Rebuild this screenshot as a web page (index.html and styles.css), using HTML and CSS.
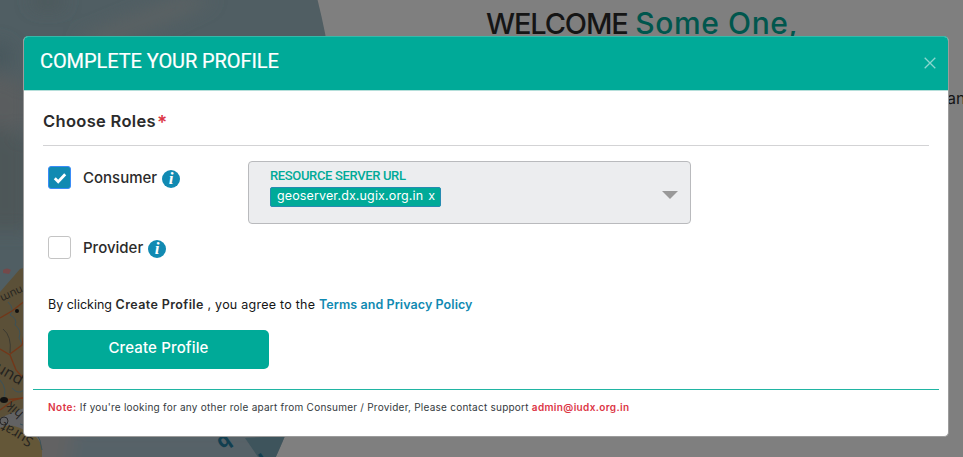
FILE: index.html
```html
<!DOCTYPE html>
<html lang="en">
<head>
<meta charset="utf-8">
<title>Complete your profile</title>
<link rel="stylesheet" href="styles.css">
</head>
<body>
<div class="page" aria-hidden="true">
  <svg class="scene" viewBox="0 0 963 457">
    <defs>
      <clipPath id="disc"><circle cx="-356.6" cy="168.8" r="695"/></clipPath>
      <filter id="soft" x="-30%" y="-30%" width="160%" height="160%"><feGaussianBlur stdDeviation="9"/></filter>
    </defs>
    <g clip-path="url(#disc)">
      <rect width="340" height="457" fill="#505e63"/>
      <g filter="url(#soft)">
        <path d="M75 40 L135 15 L185 -5 L215 0 L160 25 L100 48Z" fill="#5b6264"/>
        <path d="M-20 75 Q10 70 30 90 V130 H-20Z" fill="#5a5d5f"/>
        <path d="M-10 40 L12 48 L10 66 L-10 70Z" fill="#46565c"/>
        <ellipse cx="48" cy="2" rx="18" ry="6" fill="#4b5658"/>
        <path d="M-20 120 L30 140 V230 H-20Z" fill="#4d5659"/>
        <path d="M-20 400 H80 L65 480 H-20Z" fill="#626263"/>
        <path d="M75 425 H300 V480 H65Z" fill="#566267"/>
      </g>
      <path d="M0 292 L20 269 L30 266 V400 L24 408 L0 418Z" fill="#5b5038"/>
      <path d="M0 428 Q10 422 24 430 Q39 435 42 448 L42 457 H0Z" fill="#645738"/>
      <path d="M245 438 L285 436 L276 457 H258Z" fill="#3e545c"/>
      <g fill="none" stroke="#3b525a">
        <path d="M8 302 q7 7 2 13 q8 4 5 10 q7 5 4 13 l5 9"/>
        <path d="M0 380 q8 9 3 20 M24 390 q-6 5 -12 -2 M20 424 q20 4 22 26"/>
      </g>
      <g fill="none" stroke="#733719">
        <path d="M0 318 L12 311 L26 300 M0 349 L10 355 L16 370 L24 379 M10 354 L22 345 L24 335 M0 410 L14 400 L26 397 M4 400 L24 398" stroke-width="1.4"/>
        <path d="M3 329 q9 7 7 24" stroke="#3c3a31"/>
      </g>
      <path d="M3 270 q4 -3 8 0 l-2 4 -6 -1Z" fill="#74494a"/>
      <ellipse cx="4" cy="400" rx="4" ry="3" fill="#111"/>
      <circle cx="17" cy="311" r="2" fill="#111"/>
      <circle cx="4" cy="421" r="4" fill="none" stroke="#292929"/>
      <g class="map-label">
        <text transform="translate(21 286) rotate(155)" font-size="11">num</text>
        <text transform="translate(24 378) rotate(210)" font-size="16">pun</text>
        <text transform="translate(24 413) rotate(222)" font-size="13">hik</text>
        <text transform="translate(34 439) rotate(210)" font-size="14">Surat</text>
      </g>
      <g class="sea-label">
        <text transform="translate(226 433) rotate(145)" font-size="20">b</text>
        <text transform="translate(262 452) rotate(145)" font-size="22">n</text>
      </g>
    </g>
  </svg>
  <div class="welcome"><span class="greet">WELCOME</span> <span class="user">Some One,</span></div>
  <div class="behind">an</div>
</div>

<main class="modal">
  <header class="head">
    <h1>COMPLETE YOUR PROFILE</h1>
    <svg class="close" viewBox="0 0 12 12"><path d="M.7 .7 L11.3 11.3 M11.3 .7 L.7 11.3"/></svg>
  </header>
  <section class="body">
    <h2><span class="choose">Choose Roles</span><span class="star">*</span></h2>
    <div class="roles">
      <div class="role-list">
        <div class="role">
          <span class="box checked"><svg viewBox="0 0 14 12"><path d="M1.8 6.3 L5.2 9.7 L12.2 2.2"/></svg></span>
          <span class="consumer">Consumer</span>
          <svg class="info" viewBox="0 0 18 18"><circle cx="9" cy="9" r="9"/><text x="9" y="14.3">i</text></svg>
        </div>
        <div class="role">
          <span class="box"></span>
          <span class="provider">Provider</span>
          <svg class="info" viewBox="0 0 18 18"><circle cx="9" cy="9" r="9"/><text x="9" y="14.3">i</text></svg>
        </div>
      </div>
      <div class="select">
        <div class="field">
          <div class="label">RESOURCE SERVER URL</div>
          <div class="tag"><span class="server">geoserver.dx.ugix.org.in</span><span>x</span></div>
        </div>
        <svg class="arrow" viewBox="0 0 16 8"><path d="M0 0 H16 L8 8Z"/></svg>
      </div>
    </div>
    <p class="terms"><span class="t1">By clicking </span><b class="t2">Create Profile</b><span class="t3"> , you agree to the </span><a>Terms and Privacy Policy</a></p>
    <button type="button">Create Profile</button>
  </section>
  <footer><b class="note">Note:</b><span class="msg"> If you're looking for any other role apart from Consumer / Provider, Please contact support </span><b class="mail">admin@iudx.org.in</b></footer>
</main>
</body>
</html>
```

FILE: styles.css
```css
* { box-sizing: border-box; }
body {
  margin: 0;
  width: 963px;
  height: 457px;
  overflow: hidden;
  background: #7f7f7f;
  font-family: Inter, Roboto, sans-serif;
  color: #2b2b2b;
}
.page { position: absolute; inset: 0; overflow: hidden; }
.scene { position: absolute; inset: 0; width: 963px; height: 457px; }
.map-label { fill: #24231f; font-family: "Open Sans", sans-serif; }
.sea-label { fill: #123f50; font-family: "Open Sans", sans-serif; font-weight: 700; }
.welcome {
  position: absolute;
  left: 486px;
  top: 5px;
  font-size: 29px;
  line-height: 36px;
  font-weight: 500;
  white-space: nowrap;
  color: #151515;
}
.greet { letter-spacing: -1.15px; }
.user { letter-spacing: .6px; font-size: 30px; color: #00564d; }
.behind { position: absolute; left: 947px; top: 87px; font-size: 16px; line-height: 22px; color: #151515; }

.modal {
  position: relative;
  display: flex;
  flex-direction: column;
  width: 926px;
  height: 401px;
  margin: 36px 0 0 23px;
  border: 1px solid #9c9c9c;
  border-top-color: #35b9aa;
  border-radius: 5px;
  overflow: hidden;
  background: #fff;
}
.head {
  display: flex;
  justify-content: space-between;
  height: 54px;
  flex: none;
  padding: 9px 12px 0 16px;
  background: #00aa98;
  border-bottom: 1px solid #b5dfda;
}
h1 { margin: 0; font: 400 20px/31px Roboto, sans-serif; letter-spacing: -.08px; color: #fff; -webkit-text-stroke: .2px #fff; }
.close { width: 12px; height: 12px; margin-top: 11px; fill: none; stroke: #8bd7cf; stroke-width: 1.3; }

.body { flex: none; height: 298px; padding: 18px 19px 0 19px; }
h2 { margin: 0; height: 37px; border-bottom: 1px solid #d3d3d5; font-size: 16.5px; line-height: 25px; font-weight: 600; }
.choose { letter-spacing: .32px; }
.star { margin-left: 1px; color: #dc3545; font-size: 19px; line-height: 20px; vertical-align: -2px; }
.roles { display: flex; height: 148px; padding: 15px 0 0 5px; }
.role-list { width: 200px; }
.role { display: flex; align-items: center; height: 33px; margin-bottom: 37px; font-size: 15px; font-weight: 500; }
.box { flex: none; display: grid; place-items: center; width: 23px; height: 23px; margin-right: 12px; border: 1px solid #c4c4c4; border-radius: 3px; }
.checked { background: #118ab2; border-color: #3a8cf8; }
.box svg { width: 14px; height: 12px; fill: none; stroke: #fff; stroke-width: 2.8; }
.info { width: 18px; height: 18px; margin-left: 5px; margin-top: 2px; fill: #118ab2; }
.info text { fill: #fff; font: italic bold 17px "Liberation Serif", serif; text-anchor: middle; }
.select { display: flex; justify-content: space-between; width: 443px; height: 63px; padding: 6px 12px 0 21px; border: 1px solid #b9babd; border-radius: 4px; background: #ecedef; }
.label { color: #00aa98; font: 500 13px/16px Roboto, sans-serif; letter-spacing: -.35px; }
.tag { display: flex; justify-content: space-between; width: 171px; height: 20px; margin-top: 3px; padding: 0 5px 0 6px; border: 1px solid #268bb1; border-radius: 2px; background: #00aa98; color: #fff; font-size: 12.5px; line-height: 16px; }
.server { letter-spacing: .13px; }
.arrow { width: 16px; height: 8px; margin-top: 23px; fill: #999; }
.terms { margin: 0 0 0 5px; height: 35px; font-size: 12.5px; line-height: 22px; color: #151515; white-space: pre; }
.terms b { font-weight: 600; color: #2b2b2b; letter-spacing: .4px; }
.t3 { letter-spacing: .24px; }
.terms a { color: #118ab2; font-weight: 600; letter-spacing: .08px; }
button { display: block; width: 221px; height: 39px; margin: 1px 0 0 5px; padding: 0 0 4px; border: 0; border-radius: 5px; background: #00aa98; color: #fff; font: 500 15px Inter, sans-serif; letter-spacing: .15px; }
footer { margin: 0 9px; padding: 8px 0 0 15px; border-top: 1px solid #20b5a3; font-size: 10px; line-height: 18px; white-space: pre; color: #343a40; }
footer b { color: #dc3545; font-weight: 600; }
.note { letter-spacing: .5px; }
.msg { letter-spacing: .24px; }
.mail { letter-spacing: .35px; }
```
